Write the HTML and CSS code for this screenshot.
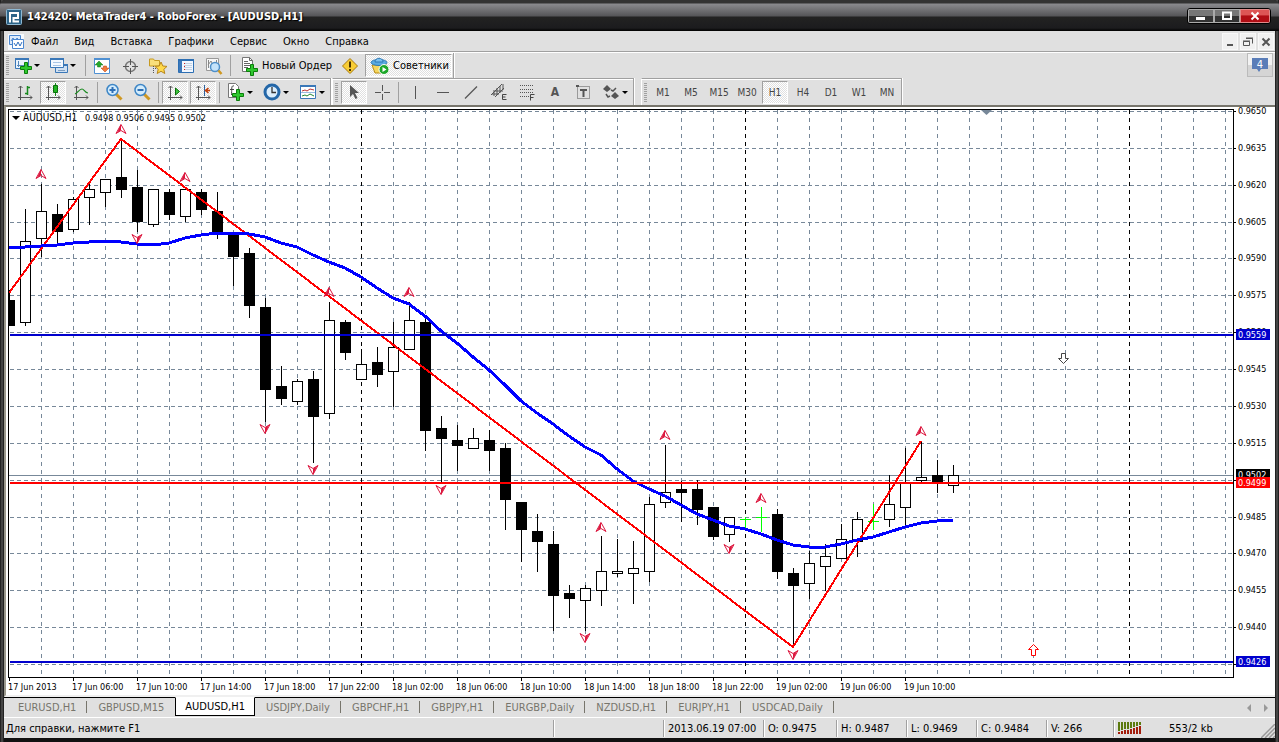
FILE: index.html
```html
<!DOCTYPE html>
<html lang="ru">
<head>
    <meta charset="UTF-8">
    <meta name="viewport" content="width=device-width, initial-scale=1.0">
    <title>142420: MetaTrader4 - RoboForex - [AUDUSD,H1]</title>
    <link rel="stylesheet" href="styles.css">
</head>
<body>
<div class="window">

    <!-- title bar -->
    <header class="titlebar">
        <svg class="app-icon" width="16" height="16" viewBox="0 0 16 16">
            <rect x="0.5" y="0.5" width="15" height="15" rx="1" fill="#2d6488" stroke="#8fb9d3"/>
            <path d="M4 13.500V4h8v5H7.500v3.500H13" fill="none" stroke="#fff" stroke-width="2"/>
        </svg>
        <h1>142420: MetaTrader4 - RoboForex - [AUDUSD,H1]</h1>
        <div class="win-buttons">
            <button type="button" aria-label="Свернуть"><svg width="12" height="10"><rect x="1" y="6" width="9" height="3" fill="#fff"/></svg></button>
            <button type="button" aria-label="Развернуть"><svg width="12" height="10"><path d="M2 1.500h8v6.500H2z" fill="none" stroke="#fff" stroke-width="2"/></svg></button>
            <button type="button" class="close" aria-label="Закрыть"><svg width="12" height="10"><path d="M2.500 1.500l7 7M9.500 1.500l-7 7" stroke="#fff" stroke-width="2"/></svg></button>
        </div>
    </header>

    <!-- menu -->
    <nav class="menubar">
        <svg class="menu-icon" width="16" height="16" viewBox="0 0 16 16">
            <rect width="16" height="16" fill="#f6f9fd"/>
            <path d="M1.500 1.500h11v9h-11z" fill="#dceafa" stroke="#4a86cf"/>
            <path d="M3 7l2-3 2 3 2-3 2 2" fill="none" stroke="#4a86cf"/>
            <path d="M4.500 5.500h11v9h-11z" fill="#fff" stroke="#4a86cf"/>
            <path d="M6 9l2 3 2-4 2 4 2-4" fill="none" stroke="#2e6fc0"/>
        </svg>
        <button type="button">Файл</button>
        <button type="button">Вид</button>
        <button type="button">Вставка</button>
        <button type="button">Графики</button>
        <button type="button">Сервис</button>
        <button type="button">Окно</button>
        <button type="button">Справка</button>
        <div class="mdi-buttons">
            <button type="button" aria-label="Свернуть окно"><svg width="12" height="12"><rect x="3" y="8" width="6" height="2" fill="#555"/></svg></button>
            <button type="button" aria-label="Восстановить окно"><svg width="12" height="12"><path d="M1.500 5.500h6v4h-6zM4 2.500h6.500v5M1 5h7M4 2h7" fill="none" stroke="#555"/></svg></button>
            <button type="button" aria-label="Закрыть окно"><svg width="12" height="12"><path d="M2.500 2.500l7 7M9.500 2.500l-7 7" stroke="#555" stroke-width="2"/></svg></button>
        </div>
    </nav>

    <!-- standard toolbar -->
    <div class="row row-top">
        <div class="toolbar">
            <span class="grip"></span>
            <button type="button" class="tool drop" aria-label="Новый график">
                <svg width="20" height="20"><path d="M2.500 2.500h13v10h-13z" fill="#eaf3fd" stroke="#3b78b8"/><path d="M2 3h14" stroke="#3b78b8" stroke-width="2"/><path d="M5.500 5v6M4 9.500h8" stroke="#5588bb"/><path d="M11.500 6.500h3v4h4v3h-4v4h-3v-4h-4v-3h4z" fill="#2fc82f" stroke="#0b7e0b"/></svg>
            </button>
            <button type="button" class="tool drop" aria-label="Профили">
                <svg width="20" height="20"><path d="M6.500 8.500h12v8h-12z" fill="#cfe0f2" stroke="#3b78b8"/><path d="M1.500 2.500h13v9h-13z" fill="#f4f9ff" stroke="#3b78b8"/><path d="M1 3h14M15 9h4" stroke="#3b78b8" stroke-width="2"/><path d="M4 6.500h8M4 9.500h8" stroke="#a9c6e6"/><path d="M9 14.500h7" stroke="#7d9dc0"/></svg>
            </button>
            <span class="sep"></span>
            <button type="button" class="tool" aria-label="Обзор рынка">
                <svg width="20" height="20"><path d="M2.500 2.500h15v15h-15z" fill="#fff" stroke="#4f90d2"/><path d="M2 3h16" stroke="#4f90d2" stroke-width="2"/><path d="M7 5l4 4H8.500v2h-3V9H3z" fill="#25a82c" stroke="#147318" stroke-width=".5"/><path d="M13 16l-4-4h2.500v-2h3v2H17z" fill="#f37a3a" stroke="#b33e0a" stroke-width=".5"/></svg>
            </button>
            <button type="button" class="tool" aria-label="Окно данных">
                <svg width="20" height="20"><circle cx="10.500" cy="10.500" r="5" fill="none" stroke="#777" stroke-width="1.500"/><path d="M10.500 3v6M10.500 12v6M3 10.500h6M12 10.500h6" stroke="#555"/></svg>
            </button>
            <button type="button" class="tool" aria-label="Навигатор">
                <svg width="20" height="20"><path d="M1.500 3h4l1 1.500h5V10h-10z" fill="#f9df7b" stroke="#c79a21"/><path d="M5.500 10v7M5 12.500h4" stroke="#555" stroke-dasharray="1 1"/><path d="M13 6l1.800 4 4.200.4-3.200 2.900 1 4.200L13 15.300l-3.800 2.200 1-4.200L7 10.400l4.200-.4z" fill="#ffd94a" stroke="#b8861a"/></svg>
            </button>
            <button type="button" class="tool" aria-label="Терминал">
                <svg width="20" height="20"><path d="M2.500 3.500h15v13h-15z" fill="#f1f7ff" stroke="#2d6fb3"/><path d="M2 4h16" stroke="#2d6fb3" stroke-width="2"/><path d="M3 5h3v11H3z" fill="#3c79bb"/><path d="M8 7.500h8M8 9.500h8M8 11.500h8M8 13.500h8" stroke="#c3d3e4"/><path d="M8 7.500h1M8 10.500h1M8 13.500h1" stroke="#c22"/></svg>
            </button>
            <button type="button" class="tool" aria-label="Тестер стратегий">
                <svg width="20" height="20"><path d="M2.500 2.500h12v12h-12z" fill="#f7f7f7" stroke="#999"/><path d="M4 9l3-4 2 4 4-4M4.500 12V4M12.500 4v8" fill="none" stroke="#888"/><circle cx="11" cy="11" r="4.500" fill="#c5e3fa" stroke="#4e8fc9" stroke-width="1.500"/><path d="M14.500 14.500l3 3.500" stroke="#cf9822" stroke-width="2.500"/></svg>
            </button>
            <span class="sep"></span>
            <button type="button" class="tool wide">
                <svg width="20" height="20"><path d="M3.500 1.500h7l3 3v11h-10z" fill="#fff" stroke="#777"/><path d="M10.500 1.500v3h3M5 5.500h4M5 7.500h6M5 9.500h6M5 11.500h4" fill="none" stroke="#666"/><path d="M11.500 8.500h3v4h4v3h-4v4h-3v-4h-4v-3h4z" fill="#2fc82f" stroke="#0b7e0b"/></svg>
                Новый Ордер
            </button>
            <button type="button" class="tool" aria-label="Предупреждение">
                <svg width="20" height="20"><path d="M10 2.500l7.500 7.500-7.500 7.500L2.500 10z" fill="#f8cd36" stroke="#a87a10" stroke-linejoin="round"/><path d="M10 5.500v6M10 13v2" stroke="#4d3600" stroke-width="2"/></svg>
            </button>
            <button type="button" class="tool wide pressed">
                <svg width="20" height="20"><path d="M2 9l3 8h8l4-8z" fill="#f7d65c" stroke="#b78c17"/><ellipse cx="9" cy="6.500" rx="8" ry="3" fill="#5aaae0" stroke="#2f79b5"/><path d="M5 6c0-5 8-5 8 0z" fill="#7cc0ee" stroke="#2f79b5"/><circle cx="14" cy="13.500" r="5" fill="#1ea82a" stroke="#fff"/><path d="M12.500 11v5l4-2.500z" fill="#fff"/></svg>
                Советники
            </button>
        </div>
        <button type="button" class="chat" aria-label="Сообщения">
            <svg width="18" height="18"><path d="M1 2h16v11h-7l-2 3-2-3H1z" fill="#5a7db8"/><text x="9" y="12" text-anchor="middle" class="chat-count">4</text></svg>
        </button>
    </div>

    <!-- charts, line studies and periods -->
    <div class="row row-bottom">
        <div class="toolbar">
            <span class="grip"></span>
            <button type="button" class="tool" aria-label="Бары">
                <svg width="20" height="20"><path d="M5.500 4v14M3 15.500h14M3.500 6l2-2 2 2M15 13.500l2 2-2 2" fill="none" stroke="#555"/><path d="M12.500 4v9M13 5.500h2M10 11.500h2" stroke="#188a1e" stroke-width="1.500"/></svg>
            </button>
            <button type="button" class="tool pressed" aria-label="Свечи">
                <svg width="20" height="20"><path d="M5.500 4v14M3 15.500h14M3.500 6l2-2 2 2M15 13.500l2 2-2 2" fill="none" stroke="#555"/><path d="M12.500 1v13" stroke="#188a1e"/><path d="M10.500 3.500h4v7h-4z" fill="#22b522" stroke="#0b6e0b"/></svg>
            </button>
            <button type="button" class="tool" aria-label="Линия">
                <svg width="20" height="20"><path d="M5.500 4v14M3 15.500h14M3.500 6l2-2 2 2M15 13.500l2 2-2 2" fill="none" stroke="#555"/><path d="M4 12c3-1 4-5 7-5 2 0 3 4 6 4" fill="none" stroke="#188a1e" stroke-width="1.200"/></svg>
            </button>
            <span class="sep"></span>
            <button type="button" class="tool" aria-label="Увеличить">
                <svg width="20" height="20"><path d="M12 12l5.500 5.500" stroke="#cf9822" stroke-width="3"/><circle cx="8.500" cy="8" r="5.500" fill="#d3ecfc" stroke="#3e86c6" stroke-width="1.500"/><path d="M5.500 8h6M8.500 5v6" stroke="#2e6fb5" stroke-width="2"/></svg>
            </button>
            <button type="button" class="tool" aria-label="Уменьшить">
                <svg width="20" height="20"><path d="M12 12l5.500 5.500" stroke="#cf9822" stroke-width="3"/><circle cx="8.500" cy="8" r="5.500" fill="#d3ecfc" stroke="#3e86c6" stroke-width="1.500"/><path d="M5.500 8h6" stroke="#2e6fb5" stroke-width="2"/></svg>
            </button>
            <span class="sep"></span>
            <button type="button" class="tool pressed" aria-label="Автопрокрутка">
                <svg width="20" height="20"><path d="M5.500 4v14M3 15.500h14M3.500 6l2-2 2 2M15 13.500l2 2-2 2" fill="none" stroke="#555"/><path d="M10.500 6v7l4-3.500z" fill="#3cc43c" stroke="#0b6e0b"/></svg>
            </button>
            <button type="button" class="tool pressed" aria-label="Сдвиг графика">
                <svg width="20" height="20"><path d="M5.500 4v14M3 15.500h14M3.500 6l2-2 2 2M15 13.500l2 2-2 2" fill="none" stroke="#555"/><path d="M11.500 3v11" stroke="#2c62a0"/><path d="M17 8.500h-4M15.500 6l-3 2.500 3 2.500" fill="none" stroke="#c2410c" stroke-width="1.500"/></svg>
            </button>
            <span class="sep"></span>
            <button type="button" class="tool drop" aria-label="Индикаторы">
                <svg width="20" height="20"><path d="M2.500 1.500h7l3 3v11h-10z" fill="#fff" stroke="#777"/><path d="M8 4c-3-1-2 3-2.500 9M4 7.500h4" fill="none" stroke="#444"/><path d="M10.500 7.500h3v4h4v3h-4v4h-3v-4h-4v-3h4z" fill="#2fc82f" stroke="#0b7e0b"/></svg>
            </button>
            <button type="button" class="tool drop" aria-label="Периоды">
                <svg width="20" height="20"><circle cx="10" cy="10" r="7" fill="#dceefc" stroke="#2467a8" stroke-width="3"/><path d="M10 5v5.500h4" fill="none" stroke="#333" stroke-width="1.300"/></svg>
            </button>
            <button type="button" class="tool drop" aria-label="Шаблоны">
                <svg width="20" height="20"><path d="M2.500 3.500h15v13h-15z" fill="#fff" stroke="#3b78b8"/><path d="M2 4h16" stroke="#3b78b8" stroke-width="2"/><path d="M4 9l3-1 2 1 3-2 4 1" fill="none" stroke="#b33"/><path d="M3 10.500h14" stroke="#9bbbe0"/><path d="M4 14l3-1 2 1 3-2 4 2" fill="none" stroke="#283"/></svg>
            </button>
        </div>
        <div class="toolbar">
            <span class="grip"></span>
            <button type="button" class="tool pressed" aria-label="Курсор">
                <svg width="20" height="20"><path d="M6 3v12l3-3 2.500 5 2-1-2.500-5h4z" fill="#555"/></svg>
            </button>
            <button type="button" class="tool" aria-label="Перекрестие">
                <svg width="20" height="20"><path d="M10.500 3v6M10.500 12v6M3 10.500h6M12 10.500h6" stroke="#555"/></svg>
            </button>
            <span class="sep"></span>
            <button type="button" class="tool" aria-label="Вертикальная линия">
                <svg width="20" height="20"><path d="M10.500 4v13" stroke="#555"/></svg>
            </button>
            <button type="button" class="tool" aria-label="Горизонтальная линия">
                <svg width="20" height="20"><path d="M4 10.500h12" stroke="#555"/></svg>
            </button>
            <button type="button" class="tool" aria-label="Трендовая линия">
                <svg width="20" height="20"><path d="M4 16.500L16 4.500" stroke="#555" stroke-width="1.300"/></svg>
            </button>
            <button type="button" class="tool" aria-label="Канал">
                <svg width="20" height="20"><path d="M2 13L13 2M6 15L15 6M5 8v6M8 6v7M11 4v7M14 2v6M3 12h7M6 9h8" stroke="#555"/><path d="M17.500 12.500h-4v5h4M13.500 15h3" fill="none" stroke="#444"/></svg>
            </button>
            <button type="button" class="tool" aria-label="Фибоначчи">
                <svg width="20" height="20"><path d="M3 3.500h14M3 7.500h14M3 10.500h14M3 14.500h9" stroke="#555" stroke-dasharray="1 1"/><path d="M17.500 12.500h-4v6M13.500 15.500h3" fill="none" stroke="#444"/></svg>
            </button>
            <button type="button" class="tool letter">A</button>
            <button type="button" class="tool" aria-label="Метка">
                <svg width="20" height="20"><path d="M4.500 4.500h12v12h-12z" fill="none" stroke="#555" stroke-dasharray="1 1"/><path d="M7 8h7M10.500 7v8" stroke="#555" stroke-width="2"/><path d="M3 3h3v2H3z" fill="#555"/></svg>
            </button>
            <button type="button" class="tool drop" aria-label="Стрелки">
                <svg width="20" height="20"><path d="M6 3l4 4-4 3-4-3zM14 10l4 4-4 3-4-3z" fill="#555"/><path d="M15 6l-3 3-2-1M5 12l2 3 2-1" fill="none" stroke="#555" stroke-width="1.500"/></svg>
            </button>
        </div>
        <div class="toolbar periods">
            <span class="grip"></span>
            <button type="button" class="tool">M1</button>
            <button type="button" class="tool">M5</button>
            <button type="button" class="tool">M15</button>
            <button type="button" class="tool">M30</button>
            <button type="button" class="tool pressed">H1</button>
            <button type="button" class="tool">H4</button>
            <button type="button" class="tool">D1</button>
            <button type="button" class="tool">W1</button>
            <button type="button" class="tool">MN</button>
        </div>
    </div>

    <!-- chart -->
    <main class="chart-panel">
        <svg id="chart" class="chart"></svg>
    </main>

    <!-- chart tabs -->
    <div class="tabs">
        <button type="button" class="tab">EURUSD,H1</button>
        <button type="button" class="tab">GBPUSD,M15</button>
        <button type="button" class="tab active">AUDUSD,H1</button>
        <button type="button" class="tab">USDJPY,Daily</button>
        <button type="button" class="tab">GBPCHF,H1</button>
        <button type="button" class="tab">GBPJPY,H1</button>
        <button type="button" class="tab">EURGBP,Daily</button>
        <button type="button" class="tab">NZDUSD,H1</button>
        <button type="button" class="tab">EURJPY,H1</button>
        <button type="button" class="tab">USDCAD,Daily</button>
        <div class="tab-scroll">
            <button type="button" aria-label="Назад"><svg width="6" height="8"><path d="M5 0v8L1 4z" fill="#999"/></svg></button>
            <button type="button" aria-label="Вперёд"><svg width="6" height="8"><path d="M1 0v8l4-4z" fill="#999"/></svg></button>
        </div>
    </div>

    <!-- status bar -->
    <footer class="statusbar">
        <span class="cell help">Для справки, нажмите F1</span>
        <span class="cell profile"></span>
        <span class="cell date">2013.06.19 07:00</span>
        <span class="cell open">O: 0.9475</span>
        <span class="cell">H: 0.9487</span>
        <span class="cell">L: 0.9469</span>
        <span class="cell">C: 0.9484</span>
        <span class="cell volume">V: 266</span>
        <span class="cell traffic">
            <svg width="24" height="12"><path d="M0 0h2v9H0zM3 0h2v8H3zM6 0h2v7H6zM9 0h2v7H9zM12 0h2v6h-2zM15 0h2v5h-2zM18 0h2v4h-2zM21 0h2v3h-2z" fill="#5c7a10"/><path d="M0 10h2v2H0zM3 9h2v3H3zM6 8h2v4H6zM9 8h2v4H9zM12 7h2v5h-2zM15 6h2v6h-2zM18 5h2v7h-2zM21 4h2v8h-2z" fill="#a31d0c"/></svg>
            553/2 kb
        </span>
        <svg class="resize" width="14" height="14"><path d="M0 14L14 0M4 14L14 4M8 14l6-6M12 14l2-2" stroke="#999" stroke-width="1.500"/></svg>
    </footer>
</div>
<script src="chart.js"></script>
</body>
</html>
```

FILE: styles.css
```css
* {
    box-sizing: border-box;
}
body {
    margin: 0;
    font-family: "DejaVu Sans Condensed", "DejaVu Sans", sans-serif;
    font-size: 11px;
    color: #000;
    background: #333;
}
button {
    margin: 0;
    padding: 0;
    border: 0;
    background: none;
    font: inherit;
    color: inherit;
}
svg {
    display: block;
    flex: none;
}
.window {
    display: flex;
    flex-direction: column;
    height: 100vh;
    padding: 0 4px 4px;
    background: linear-gradient(to right, #111 0, #555 2px, #111 4px, #111 calc(100% - 4px), #555 calc(100% - 2px), #111 100%);
}

/* title bar */
.titlebar {
    display: flex;
    flex: none;
    align-items: center;
    height: 31px;
    margin: 0 -4px;
    padding: 3px 8px 0 6px;
    border-radius: 5px 5px 0 0;
    background: linear-gradient(#333 0, #333 3px, #8a8a8e 4px, #555558 16px, #222 17px, #1c1c1e 28px, #000 31px);
}
.titlebar h1 {
    flex: 1;
    margin: 0 0 0 5px;
    font-size: 11px;
    font-weight: bold;
    line-height: 16px;
    color: #fff;
    text-shadow: 1px 1px 1px #000;
}
.win-buttons {
    display: flex;
    margin-bottom: 2px;
    border: 1px solid #000;
    border-radius: 3px;
    overflow: hidden;
}
.win-buttons button {
    display: flex;
    align-items: center;
    justify-content: center;
    width: 26px;
    height: 14px;
    border: 1px solid #aaa;
    background: linear-gradient(#777 50%, #333 50%);
}
.win-buttons .close {
    width: 30px;
    border-color: #e08a8a;
    background: linear-gradient(#d55 40%, #b00d14 50%);
}

/* menu */
.menubar {
    display: flex;
    flex: none;
    align-items: center;
    height: 22px;
    padding-left: 4px;
    border-bottom: 1px solid #fff;
    background: #e0e0e0;
    box-shadow: inset 0 -1px #a0a0a0;
    line-height: 18px;
}
.menu-icon {
    margin-right: 7px;
}
.menubar > button {
    margin-right: 16px;
}
.mdi-buttons {
    display: flex;
    gap: 2px;
    margin-left: auto;
    padding-right: 1px;
}
.mdi-buttons button {
    display: flex;
    align-items: center;
    justify-content: center;
    width: 16px;
    height: 17px;
    background: #f0f0f0;
    border: 1px solid #f8f8f8;
}

/* toolbars */
.row {
    display: flex;
    flex: none;
    gap: 6px;
    height: 27px;
    background: #e0e0e0;
}
.row-top {
    height: 25px;
    justify-content: space-between;
}
.toolbar {
    display: flex;
    align-items: center;
    padding-left: 2px;
    border-right: 1px solid #a0a0a0;
    box-shadow: 1px 0 #fff, inset 0 1px #fff;
}
.row-bottom .toolbar {
    border-top: 1px solid #a0a0a0;
}
.toolbar + .toolbar {
    margin-left: -5px;
    border-left: 1px solid #fff;
}
.toolbar.periods {
    margin-left: 1px;
}
.grip {
    width: 3px;
    height: 19px;
    margin-right: 2px;
    background: repeating-linear-gradient(#a0a0a0 0, #a0a0a0 1px, #e0e0e0 1px, #e0e0e0 2px);
}
.sep {
    width: 1px;
    height: 21px;
    margin: 0 2px;
    background: #a0a0a0;
}
.tool {
    display: flex;
    align-items: center;
    justify-content: center;
    width: 26px;
    height: 23px;
    margin: 0 1px;
    border: 1px solid transparent;
}
.drop {
    justify-content: flex-start;
    gap: 1px;
    width: 34px;
}
.row-bottom .drop {
    width: 32px;
    margin-left: 3px;
}
.drop::after {
    content: "";
    border: 3px solid transparent;
    border-top-color: #000;
    border-bottom: 0;
}
.wide {
    width: auto;
    padding: 0 2px 0 4px;
    gap: 3px;
}
.pressed {
    border-color: #a0a0a0 #fff #fff #a0a0a0;
    background: repeating-conic-gradient(#e0e0e0 0 25%, #fff 0 50%) 0 0 / 2px 2px;
}
.letter {
    font-size: 12px;
    font-weight: bold;
    color: #555;
}
.periods .tool {
    font-size: 10px;
    color: #444;
}
.chat {
    display: flex;
    align-items: center;
    justify-content: center;
    width: 26px;
    height: 24px;
    margin-right: 2px;
    border: 1px solid #bbb;
    background: linear-gradient(#f2f2f2 50%, #d5d5d5 50%);
}
.chat-count {
    font-size: 11px;
    fill: #fff;
}

/* chart */
.chart-panel {
    flex: 1;
    min-height: 0;
    padding: 2px 2px 0;
    border-top: 2px solid #77756c;
    border-left: 2px solid #9a988c;
    border-bottom: 2px solid #f0f0f0;
    background: #fff;
}
.chart {
    width: 100%;
    height: 100%;
    overflow: visible;
    font-size: 9px;
}
.chart .caption {
    font-size: 10px;
}
.crisp {
    shape-rendering: crispEdges;
}

/* tabs */
.tabs {
    display: flex;
    flex: none;
    height: 20px;
    padding-left: 3px;
    border-top: 1px solid #000;
    background: #e0e0e0;
}
.tab {
    position: relative;
    height: 18px;
    padding: 0 11px;
    line-height: 17px;
    color: #77756c;
}
.tab:not(.active)::after {
    content: "";
    position: absolute;
    top: 3px;
    right: 0;
    width: 1px;
    height: 12px;
    background: #77756c;
}
.tab:has(+ .active)::after {
    display: none;
}
.tab.active {
    height: 19px;
    margin-top: -1px;
    padding: 0 9px;
    border: 1px solid #000;
    border-top-color: #fff;
    background: #fff;
    color: #000;
}
.tab-scroll {
    display: flex;
    gap: 11px;
    margin-left: auto;
    padding-right: 6px;
}

/* status bar */
.statusbar {
    display: flex;
    flex: none;
    align-items: center;
    height: 21px;
    border-top: 1px solid #fff;
    background: #e0e0e0;
}
.cell {
    width: 70px;
    height: 17px;
    padding-left: 4px;
    border-left: 1px solid #a0a0a0;
    box-shadow: inset 1px 0 #fff;
    line-height: 17px;
    white-space: nowrap;
}
.cell.help {
    flex: 1;
    padding-left: 2px;
    border: 0;
    box-shadow: none;
}
.cell.profile {
    width: 110px;
}
.cell.date {
    width: 100px;
}
.cell.open {
    width: 73px;
}
.cell.volume {
    width: 67px;
}
.cell.traffic {
    display: flex;
    align-items: center;
    gap: 27px;
    width: 148px;
}
.resize {
    align-self: flex-end;
}
```

FILE: chart.js
```javascript
const svg = document.getElementById('chart');
const STEP = 16;          // distance between bars
const AXIS_W = 40;        // price axis
const AXIS_H = 18;        // time axis

// high, body top, body bottom, low, type: b - bear, w - bull, d - doji
const bars = [
    [181, 191, 217, 217, 'b'], [100, 132, 214, 217, 'w'], [75, 102, 130, 148, 'w'],
    [95, 105, 123, 135, 'b'], [88, 90, 121, 123, 'w'], [75, 80, 89, 116, 'w'],
    [70, 70, 84, 98, 'w'], [30, 68, 81, 89, 'b'], [61, 78, 113, 123, 'b'],
    [80, 80, 116, 118, 'w'], [80, 83, 106, 111, 'b'], [79, 80, 108, 113, 'w'],
    [80, 83, 101, 106, 'b'], [83, 102, 123, 130, 'b'], [124, 124, 148, 177, 'b'],
    [139, 144, 197, 209, 'b'], [189, 198, 281, 313, 'b'], [257, 277, 290, 296, 'b'],
    [270, 272, 293, 296, 'w'], [262, 270, 308, 354, 'b'], [193, 211, 305, 310, 'w'],
    [211, 213, 244, 251, 'b'], [240, 255, 271, 271, 'w'], [238, 253, 266, 278, 'b'],
    [213, 238, 263, 298, 'w'], [193, 211, 241, 241, 'w'], [208, 213, 322, 342, 'b'],
    [307, 319, 330, 373, 'b'], [316, 331, 337, 362, 'b'], [319, 329, 340, 340, 'w'],
    [321, 331, 342, 362, 'b'], [334, 339, 391, 421, 'b'], [393, 393, 421, 453, 'b'],
    [405, 422, 433, 463, 'b'], [422, 435, 487, 522, 'b'], [476, 484, 490, 509, 'b'],
    [476, 479, 492, 522, 'w'], [427, 462, 482, 497, 'w'], [430, 462, 465, 468, 'w'],
    [432, 459, 465, 495, 'w'], [388, 395, 463, 473, 'w'], [336, 383, 394, 399, 'w'],
    [372, 380, 384, 413, 'b'], [371, 380, 401, 416, 'b'], [398, 398, 428, 431, 'b'],
    [408, 408, 426, 433, 'w'], [408, 410, 411, 419, 'd'], [398, 408, 409, 423, 'd'],
    [400, 405, 463, 470, 'b'], [459, 464, 477, 537, 'b'], [442, 454, 475, 490, 'w'],
    [435, 447, 458, 482, 'w'], [415, 430, 450, 450, 'w'], [403, 410, 433, 448, 'w'],
    [395, 412, 413, 421, 'd'], [366, 395, 411, 418, 'w'], [339, 374, 399, 418, 'w'],
    [332, 368, 372, 373, 'w'], [351, 366, 373, 384, 'b'], [356, 366, 377, 384, 'w']
];
const average = [
    139, 138, 137, 136, 134, 133, 132, 133, 135, 136, 134, 129, 126, 124, 124,
    125, 128, 134, 138, 146, 153, 159, 168, 179, 189, 195, 207, 222, 234, 248,
    261, 276, 292, 304, 315, 327, 338, 346, 360, 372, 380, 387, 396, 405, 411,
    417, 420, 425, 431, 436, 438, 438, 435, 431, 428, 423, 418, 414, 412, 411
];
// bar index, y
const zigzag = [[0, 184], [7, 30], [49, 538], [57, 332]];
const fractalsUp = [[7, 20], [2, 65], [11, 68], [20, 183], [25, 183], [37, 418], [41, 326], [47, 389], [57, 322]];
const fractalsDown = [[8, 130], [16, 320], [19, 361], [27, 381], [36, 529], [45, 440], [49, 546]];
const times = [
    '17 Jun 2013', '17 Jun 06:00', '17 Jun 10:00', '17 Jun 14:00', '17 Jun 18:00',
    '17 Jun 22:00', '18 Jun 02:00', '18 Jun 06:00', '18 Jun 10:00', '18 Jun 14:00',
    '18 Jun 18:00', '18 Jun 22:00', '19 Jun 02:00', '19 Jun 06:00', '19 Jun 10:00'
];

const barX = i => 1 + i * STEP;
const rect = (x, y, w, h, fill) => `<rect x="${x}" y="${y}" width="${w}" height="${h}" fill="${fill}"/>`;
const text = (x, y, s, fill = '#000', cls = '') => `<text x="${x}" y="${y}" fill="${fill}" class="${cls}">${s}</text>`;

function draw() {
    const right = svg.clientWidth - AXIS_W;
    const bottom = svg.clientHeight - AXIS_H;
    let out = '<g class="crisp">';

    // grid
    for (let k = 0; k < 16; k++) {
        const y = Math.round(2 + k * 36.87) + 0.5;
        out += `<path d="M2 ${y}H${right}" stroke="#778899" stroke-dasharray="4 3"/>`;
    }
    for (let x = 33, n = 0; x < right; x += 32, n++) {
        const day = n % 12 === 10;
        out += `<path d="M${x + 0.5} 1V${bottom}" stroke="${day ? '#000' : '#778899'}" stroke-dasharray="4 4"/>`;
    }
    out += rect(1, 366, right, 1, '#778899');

    // candles
    bars.forEach(([high, top, low, end, type], i) => {
        const x = barX(i);
        const left = Math.max(x - 5, 0);
        const width = x + 6 - left;
        out += rect(x, high, 1, end - high, type === 'd' ? '#00ff00' : '#000');
        out += rect(left, top, width, low - top, type === 'd' ? '#00ff00' : '#000');
        if (type === 'w') out += rect(left + 1, top + 1, width - 2, low - top - 2, '#fff');
    });

    // indicators
    const zz = zigzag.map(([i, y]) => `${barX(i)},${y}`).join(' ');
    out += `<polyline points="${zz}" fill="none" stroke="#f00" stroke-width="2"/>`;
    const ma = average.map((y, i) => `${barX(i)},${y}`).join(' ');
    out += `<polyline points="${ma}" fill="none" stroke="#00f" stroke-width="3"/>`;

    // levels
    out += rect(2, 225, right - 2, 2, '#0000cd');
    out += rect(2, 373, right - 2, 2, '#f00');
    out += rect(2, 552, right - 2, 2, '#0000cd');

    // frame and ticks
    out += `<path d="M0.5 0.5H${right + 0.5}V${bottom + 0.5}H0.5z" fill="none" stroke="#000"/>`;
    for (let k = 0; k < 16; k++) out += rect(right, Math.round(2 + k * 36.87), 3, 1, '#000');
    times.forEach((t, i) => out += rect(1 + i * 64, bottom, 1, 4, '#000'));
    out += '</g>';

    // fractals
    fractalsUp.forEach(([i, y]) => {
        out += `<path transform="translate(${barX(i)} ${y})" d="M0-4.500L-5 4.500L0 1.500L5 4.500z" fill="none" stroke="#dc143c"/>`;
        out += `<path transform="translate(${barX(i)} ${y})" d="M0-5L-4 4L0 1z" fill="#dc143c"/>`;
    });
    fractalsDown.forEach(([i, y]) => {
        out += `<path transform="translate(${barX(i)} ${y})" d="M0 4.500L-5-4.500L0-1.500L5-4.500z" fill="none" stroke="#dc143c"/>`;
        out += `<path transform="translate(${barX(i)} ${y})" d="M0 5L4-4L0-1z" fill="#dc143c"/>`;
    });
    out += '<path d="M1053.500 244.500h4v5h3l-5 5l-5-5h3z" fill="#fff" stroke="#444"/>';
    out += '<path d="M1023.500 546.500h4v-6h3l-5-5l-5 5h3z" fill="#fff" stroke="#f00"/>';
    out += '<path d="M973 1h11l-5.500 5z" fill="#778899"/>';

    // price axis, 0.9500 is covered by the current price
    for (let k = 0; k < 15; k++) {
        if (k === 10) continue;
        const price = ((9650 - k * 15) / 10000).toFixed(4);
        out += text(right + 5, Math.round(5 + k * 36.87), price);
    }
    [[360, '0.9502', '#000'], [220, '0.9559', '#0000cd'], [368, '0.9499', '#f00'], [547, '0.9426', '#0000cd']].forEach(([y, p, c]) => {
        out += rect(right + 3, y, 34, 11, c) + text(right + 5, y + 9, p, '#fff');
    });

    // time axis
    times.forEach((t, i) => out += text(i * 64, bottom + 13, t));

    // caption
    out += '<path d="M4 7h8l-4 4z"/>';
    out += text(15, 12, 'AUDUSD,H1', '#000', 'caption') + text(77, 12, '0.9498 0.9506 0.9495 0.9502');

    svg.innerHTML = out;
}

draw();
window.addEventListener('resize', draw);
```
